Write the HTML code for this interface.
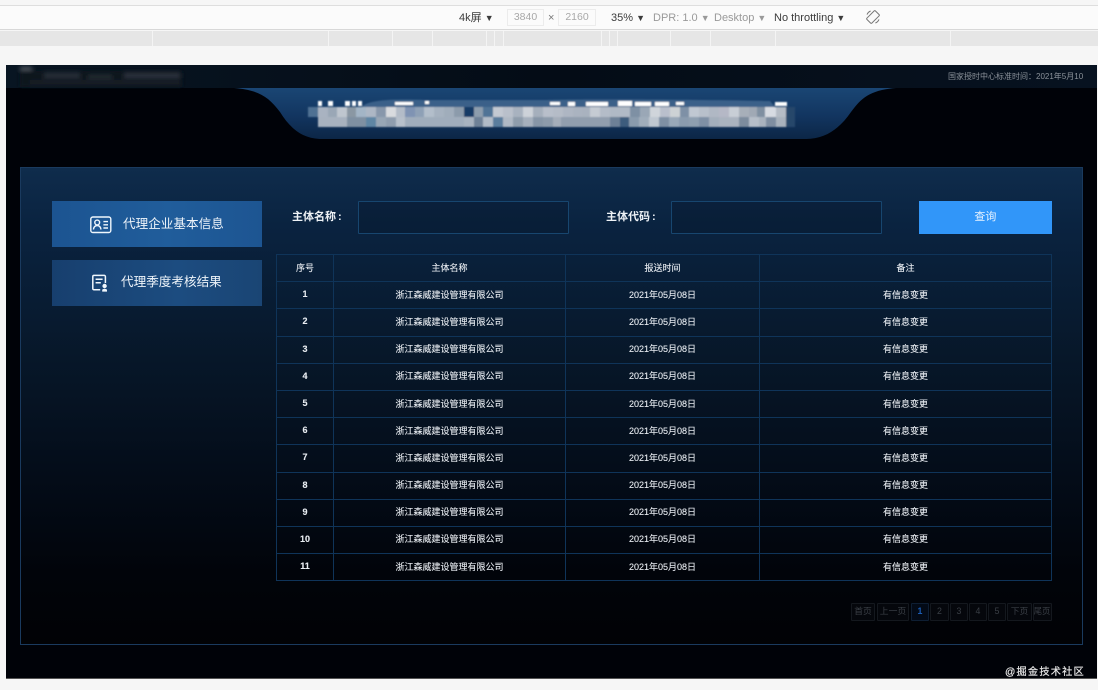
<!DOCTYPE html>
<html lang="zh-CN">
<head>
<meta charset="utf-8">
<title>代理企业基本信息</title>
<style>
html,body{margin:0;padding:0;width:1098px;height:690px;overflow:hidden;background:#f6f6f6;font-family:"Liberation Sans","Noto Sans CJK SC",sans-serif}
*{box-sizing:border-box}
.abs,.tb,.ruler,.tick,.screen,.panel,.menu,.lbl,.inp,.btn,.pg,.wm,.clock{position:absolute}
.tb{left:0;top:5px;width:1098px;height:25px;background:#fbfbfb;border-top:1px solid #dedede;border-bottom:1px solid #d8d8d8}
.tbt{position:absolute;top:18px;transform:translateY(-50%);font-size:11px;color:#3c3c3c;white-space:nowrap;line-height:14px}
.tbt.g{color:#9a9a9a}
.tbi{position:absolute;top:9px;height:17px;border:1px solid #ececec;background:#fbfbfb;font-size:10.5px;color:#a8a8a8;text-align:center;line-height:15px}
.ruler{left:0;top:31px;width:1098px;height:15px;background:#e6e6e6}
.tick{top:0;width:1px;height:15px;background:#f4f4f4}
.screen{left:6px;top:65px;width:1091px;height:613.5px;background:#000208;border-bottom:1px solid #555}
.hd{position:absolute;left:0;top:0}
.clock{left:942px;top:6px;font-size:8px;line-height:11px;color:#8b929a;white-space:nowrap}
.panel{left:14px;top:102px;width:1063px;height:478px;border:1px solid #1a3a5e;background:linear-gradient(180deg,#0f2c4c 0%,#0a2340 12%,#071729 40%,#030a15 70%,#01040a 85%,#010205 100%)}
.menu{left:31px;width:210px;height:45.7px;color:#eef4fa;font-size:12.6px}
.m1{top:33px;line-height:47px;background:linear-gradient(90deg,#1c5491,#205d9b 55%,#1d5592)}
.m2{top:92px;line-height:45px;background:linear-gradient(90deg,#173f6e,#1c4c80 60%,#1a4574)}
.menu span{position:absolute;white-space:nowrap}
.menu svg{position:absolute}
.lbl{top:41px;font-size:11px;font-weight:bold;line-height:16px;color:#eef2f6;white-space:nowrap}
.lbl b{margin-left:2px}
.inp{top:33px;height:32.5px;border:1px solid #17466f;border-radius:1px;background:rgba(3,12,28,.22)}
.btn{left:898px;top:33px;width:132.7px;height:32.5px;background:#3196f9;color:#e6f2ff;font-size:11px;line-height:32px;text-align:center}
table{position:absolute;left:255px;top:86px;width:776px;border-collapse:collapse;table-layout:fixed}
th,td{height:27.2px;padding:0 0 2px;border:1px solid #0f3459;text-align:center;font-size:9px;font-weight:normal;color:#e9edf2;white-space:nowrap;-webkit-text-stroke:.1px #e9edf2}
td:first-child{font-weight:bold}
.pg{top:435px;height:17.5px;border:1px solid #14181e;border-radius:1px;background:#05070c;color:#3a3f46;font-size:8.8px;line-height:15.5px;text-align:center;white-space:nowrap}
.pg.on{color:#1b5db5;font-weight:bold;background:#030a16;border-color:#0e1e33}
.wm{left:999px;top:601px;font-size:10.2px;letter-spacing:1.2px;line-height:14px;color:#e8e8e8;white-space:nowrap;-webkit-text-stroke:.2px #e8e8e8}
</style>
</head>
<body>
<div class="tb"></div>
<div class="tbt" style="left:459px">4k屏 <span style="font-size:9px">▼</span></div>
<div class="tbi" style="left:507px;width:37px">3840</div>
<div class="tbt g" style="left:548px;color:#777">×</div>
<div class="tbi" style="left:558px;width:38px">2160</div>
<div class="tbt" style="left:611px">35% <span style="font-size:9px">▼</span></div>
<div class="tbt g" style="left:653px">DPR: 1.0 <span style="font-size:9px">▼</span></div>
<div class="tbt g" style="left:714px">Desktop <span style="font-size:9px">▼</span></div>
<div class="tbt" style="left:774px">No throttling <span style="font-size:9px">▼</span></div>
<svg class="abs" style="left:866px;top:10px" width="14" height="14" viewBox="0 0 14 14" fill="none" stroke="#777" stroke-width="1"><rect x="3.5" y="1" width="7" height="12" rx="1" transform="rotate(45 7 7)"/><path d="M1 4.6A6.5 6.5 0 0 1 4.6 1M13 9.4A6.5 6.5 0 0 1 9.4 13"/></svg>

<div class="ruler">
<i class="tick" style="left:152px"></i><i class="tick" style="left:328px"></i><i class="tick" style="left:392px"></i><i class="tick" style="left:432px"></i><i class="tick" style="left:486px"></i><i class="tick" style="left:494px"></i><i class="tick" style="left:503px"></i><i class="tick" style="left:601px"></i><i class="tick" style="left:609px"></i><i class="tick" style="left:617px"></i><i class="tick" style="left:670px"></i><i class="tick" style="left:710px"></i><i class="tick" style="left:775px"></i><i class="tick" style="left:950px"></i>
</div>

<div class="screen">
  <svg class="hd" width="1091" height="90" viewBox="6 65 1091 90">
    <defs>
      <linearGradient id="bl" x1="0" y1="0" x2="0" y2="1"><stop offset="0" stop-color="#1a4674"/><stop offset=".55" stop-color="#123560"/><stop offset="1" stop-color="#0c2646"/></linearGradient>
      <linearGradient id="band" x1="0" y1="0" x2="1" y2="0"><stop offset="0" stop-color="#081522"/><stop offset=".5" stop-color="#040c16"/><stop offset="1" stop-color="#071220"/></linearGradient>
      <filter id="b1" x="-5%" y="-20%" width="110%" height="140%"><feGaussianBlur stdDeviation=".8"/></filter>
      <filter id="b2" x="-5%" y="-30%" width="110%" height="160%"><feGaussianBlur stdDeviation="2"/></filter>
    </defs>
    <rect x="6" y="65" width="1091" height="23" fill="url(#band)"/>
    <path d="M234 88H896C868 90 860 100 851 112C840 128 826 139 806 139H322C302 139 290 128 280 112C268 96 258 90 234 88Z" fill="url(#bl)"/>
    <g filter="url(#b2)">
      <rect x="20" y="71" width="162" height="16" fill="#10171f"/>
      <rect x="20" y="67" width="12" height="3" fill="#5b6168"/>
      <rect x="44" y="73" width="36" height="5" fill="#262e37"/>
      <rect x="88" y="75" width="24" height="4" fill="#232a33"/>
      <rect x="124" y="73" width="56" height="5" fill="#2a323c"/>
      <rect x="30" y="80" width="150" height="5" fill="#161d26"/>
    </g>
    <g filter="url(#b1)">
      <path d="M362 107C368 99 400 99 425 100H545C570 99 660 99 770 101L775 107Z" fill="#3a6189"/>
      <g fill="#fff">
        <rect x="318" y="101" width="4" height="5"/><rect x="328" y="101" width="5" height="5"/><rect x="345" y="101" width="5" height="5"/><rect x="352" y="101" width="4" height="5"/><rect x="358" y="101" width="4" height="5"/><rect x="395" y="102" width="18" height="3"/><rect x="425" y="101" width="4" height="3"/><rect x="550" y="102" width="10" height="3"/><rect x="568" y="102" width="7" height="4"/><rect x="586" y="102" width="22" height="4"/><rect x="618" y="101" width="14" height="5"/><rect x="635" y="102" width="16" height="4"/><rect x="655" y="102" width="14" height="4"/><rect x="676" y="102" width="8" height="3"/><rect x="775" y="102" width="12" height="4"/>
      </g>
      <g shape-rendering="crispEdges">
      <rect x="308" y="107" width="10" height="10" fill="#4f7193"/><rect x="318" y="107" width="10" height="10" fill="#a9b3c1"/><rect x="328" y="107" width="9" height="10" fill="#9aa7b6"/><rect x="337" y="107" width="10" height="10" fill="#bfc6cf"/><rect x="347" y="107" width="9" height="10" fill="#8a97a3"/><rect x="356" y="107" width="10" height="10" fill="#a3b5c6"/><rect x="366" y="107" width="10" height="10" fill="#adb7c5"/><rect x="376" y="107" width="10" height="10" fill="#8897ab"/><rect x="386" y="107" width="10" height="10" fill="#d9dbdf"/><rect x="396" y="107" width="9" height="10" fill="#b3bcc8"/><rect x="405" y="107" width="10" height="10" fill="#7f93b3"/><rect x="415" y="107" width="9" height="10" fill="#8ea0b6"/><rect x="424" y="107" width="10" height="10" fill="#b3becb"/><rect x="434" y="107" width="10" height="10" fill="#a6b2c0"/><rect x="444" y="107" width="10" height="10" fill="#a0adbb"/><rect x="454" y="107" width="10" height="10" fill="#8c9bab"/><rect x="464" y="107" width="10" height="10" fill="#123a66"/><rect x="474" y="107" width="9" height="10" fill="#8d9dad"/><rect x="483" y="107" width="10" height="10" fill="#4f7396"/><rect x="493" y="107" width="10" height="10" fill="#c3c9d2"/><rect x="503" y="107" width="10" height="10" fill="#b9c0cb"/><rect x="513" y="107" width="10" height="10" fill="#a8b2bf"/><rect x="523" y="107" width="10" height="10" fill="#cdd2d9"/><rect x="533" y="107" width="10" height="10" fill="#a5afbc"/><rect x="543" y="107" width="10" height="10" fill="#b8bfca"/>
      <rect x="553" y="107" width="10" height="10" fill="#b5bcc7"/><rect x="563" y="107" width="10" height="10" fill="#aeb6c3"/><rect x="573" y="107" width="9" height="10" fill="#aab3c0"/><rect x="582" y="107" width="8" height="10" fill="#a9b2bf"/><rect x="590" y="107" width="10" height="10" fill="#c5cbd3"/><rect x="600" y="107" width="10" height="10" fill="#b4bcc8"/><rect x="610" y="107" width="10" height="10" fill="#b0b9c5"/><rect x="620" y="107" width="10" height="10" fill="#b1bac6"/><rect x="630" y="107" width="10" height="10" fill="#7e90a4"/><rect x="640" y="107" width="10" height="10" fill="#9aa7b6"/><rect x="650" y="107" width="10" height="10" fill="#d0d5db"/><rect x="660" y="107" width="10" height="10" fill="#b9bfcc"/><rect x="670" y="107" width="10" height="10" fill="#cdd2d5"/><rect x="680" y="107" width="9" height="10" fill="#7e90a6"/><rect x="689" y="107" width="10" height="10" fill="#c0c8d2"/><rect x="699" y="107" width="10" height="10" fill="#b8c0cb"/><rect x="709" y="107" width="10" height="10" fill="#b0b8c4"/><rect x="719" y="107" width="10" height="10" fill="#b5b8c6"/><rect x="729" y="107" width="10" height="10" fill="#c8ced6"/><rect x="739" y="107" width="10" height="10" fill="#a7afb9"/><rect x="749" y="107" width="8" height="10" fill="#a0a9b5"/><rect x="757" y="107" width="8" height="10" fill="#7f8fa1"/><rect x="765" y="107" width="11" height="10" fill="#d7dbe2"/><rect x="776" y="107" width="10" height="10" fill="#b5bcc5"/><rect x="786" y="107" width="9" height="10" fill="#27476b"/>
      <rect x="318" y="117" width="29" height="10" fill="#a8b2bf"/><rect x="347" y="117" width="19" height="10" fill="#7f90a2"/><rect x="366" y="117" width="10" height="10" fill="#5f86a4"/><rect x="376" y="117" width="10" height="10" fill="#98a6b5"/><rect x="386" y="117" width="10" height="10" fill="#8f9dae"/><rect x="396" y="117" width="9" height="10" fill="#b7c0cb"/><rect x="405" y="117" width="59" height="10" fill="#a0adbc"/><rect x="464" y="117" width="10" height="10" fill="#a8b3c0"/><rect x="474" y="117" width="9" height="10" fill="#6e8197"/><rect x="483" y="117" width="10" height="10" fill="#b1bbc7"/><rect x="493" y="117" width="10" height="10" fill="#5a7d9d"/><rect x="503" y="117" width="10" height="10" fill="#b0b9c5"/><rect x="513" y="117" width="10" height="10" fill="#8f9dac"/><rect x="523" y="117" width="10" height="10" fill="#a6b0bd"/><rect x="533" y="117" width="10" height="10" fill="#8796a7"/><rect x="543" y="117" width="10" height="10" fill="#8d9bab"/>
      <rect x="553" y="117" width="8" height="10" fill="#a5aeba"/><rect x="561" y="117" width="49" height="10" fill="#919eae"/><rect x="610" y="117" width="10" height="10" fill="#6d8097"/><rect x="620" y="117" width="9" height="10" fill="#3e5c7d"/><rect x="629" y="117" width="10" height="10" fill="#8a9bad"/><rect x="639" y="117" width="10" height="10" fill="#a0adbb"/><rect x="649" y="117" width="10" height="10" fill="#c0c8d1"/><rect x="659" y="117" width="10" height="10" fill="#7f90a4"/><rect x="669" y="117" width="10" height="10" fill="#99a8b8"/><rect x="679" y="117" width="10" height="10" fill="#8a9bae"/><rect x="689" y="117" width="10" height="10" fill="#8e9fb0"/><rect x="699" y="117" width="10" height="10" fill="#7f90a5"/><rect x="709" y="117" width="10" height="10" fill="#a4afbc"/><rect x="719" y="117" width="20" height="10" fill="#aab3bf"/><rect x="739" y="117" width="10" height="10" fill="#7d8c9e"/><rect x="749" y="117" width="10" height="10" fill="#b6bec9"/><rect x="759" y="117" width="7" height="10" fill="#a9b2be"/><rect x="766" y="117" width="10" height="10" fill="#7f8ea1"/><rect x="776" y="117" width="10" height="10" fill="#a9b2bd"/><rect x="786" y="117" width="9" height="10" fill="#27476b"/>
      </g>
    </g>
  </svg>
  <div class="clock">国家授时中心标准时间：2021年5月10</div>

  <div class="panel">
    <div class="menu m1">
      <svg style="left:38px;top:15px" width="22" height="18" viewBox="0 0 22 18" fill="none" stroke="#f0f7fd" stroke-width="1.4"><rect x=".8" y="1" width="20" height="15.5" rx="2"/><circle cx="7.2" cy="6.5" r="2.4"/><path d="M3.4 13.5C3.8 10.8 5.3 9.6 7.2 9.6S10.6 10.8 11 13.5"/><path d="M13.4 5.6H18M13.4 8.8H18M13.4 12H18"/></svg>
      <span style="left:71px">代理企业基本信息</span>
    </div>
    <div class="menu m2">
      <svg style="left:40px;top:14px" width="16" height="18" viewBox="0 0 16 18" fill="none" stroke="#f0f7fd" stroke-width="1.5"><path d="M13.4 9V2.6A1.2 1.2 0 0 0 12.2 1.4H2A1.2 1.2 0 0 0 .8 2.6V14.6A1.2 1.2 0 0 0 2 15.8H8.2"/><path d="M3.6 5.2H10.6M3.6 8.8H8.8"/><circle cx="12.6" cy="12" r="2.2" fill="#f0f7fd" stroke="none"/><path d="M10.2 17.6V15.6Q12.6 13.8 15 15.6V17.6Z" fill="#f0f7fd" stroke="none"/></svg>
      <span style="left:69px">代理季度考核结果</span>
    </div>

    <div class="lbl" style="left:271px">主体名称<b>:</b></div>
    <div class="inp" style="left:337px;width:210.5px"></div>
    <div class="lbl" style="left:585px">主体代码<b>:</b></div>
    <div class="inp" style="left:650px;width:211px"></div>
    <div class="btn">查询</div>

    <table>
      <colgroup><col style="width:57px"><col style="width:232px"><col style="width:194px"><col></colgroup>
      <tr><th>序号</th><th>主体名称</th><th>报送时间</th><th>备注</th></tr>
      <tr><td>1</td><td>浙江森威建设管理有限公司</td><td>2021年05月08日</td><td>有信息变更</td></tr>
      <tr><td>2</td><td>浙江森威建设管理有限公司</td><td>2021年05月08日</td><td>有信息变更</td></tr>
      <tr><td>3</td><td>浙江森威建设管理有限公司</td><td>2021年05月08日</td><td>有信息变更</td></tr>
      <tr><td>4</td><td>浙江森威建设管理有限公司</td><td>2021年05月08日</td><td>有信息变更</td></tr>
      <tr><td>5</td><td>浙江森威建设管理有限公司</td><td>2021年05月08日</td><td>有信息变更</td></tr>
      <tr><td>6</td><td>浙江森威建设管理有限公司</td><td>2021年05月08日</td><td>有信息变更</td></tr>
      <tr><td>7</td><td>浙江森威建设管理有限公司</td><td>2021年05月08日</td><td>有信息变更</td></tr>
      <tr><td>8</td><td>浙江森威建设管理有限公司</td><td>2021年05月08日</td><td>有信息变更</td></tr>
      <tr><td>9</td><td>浙江森威建设管理有限公司</td><td>2021年05月08日</td><td>有信息变更</td></tr>
      <tr><td>10</td><td>浙江森威建设管理有限公司</td><td>2021年05月08日</td><td>有信息变更</td></tr>
      <tr><td>11</td><td>浙江森威建设管理有限公司</td><td>2021年05月08日</td><td>有信息变更</td></tr>
    </table>

    <div class="pg" style="left:830px;width:24px">首页</div>
    <div class="pg" style="left:856px;width:32px">上一页</div>
    <div class="pg on" style="left:890px;width:18px">1</div>
    <div class="pg" style="left:909px;width:19px">2</div>
    <div class="pg" style="left:929px;width:18px">3</div>
    <div class="pg" style="left:948px;width:18px">4</div>
    <div class="pg" style="left:967px;width:18px">5</div>
    <div class="pg" style="left:986px;width:25px">下页</div>
    <div class="pg" style="left:1012px;width:19px;padding:0;text-indent:-1px;font-size:8.4px">尾页</div>
  </div>
  <div class="wm">@掘金技术社区</div>
</div>
</body>
</html>
